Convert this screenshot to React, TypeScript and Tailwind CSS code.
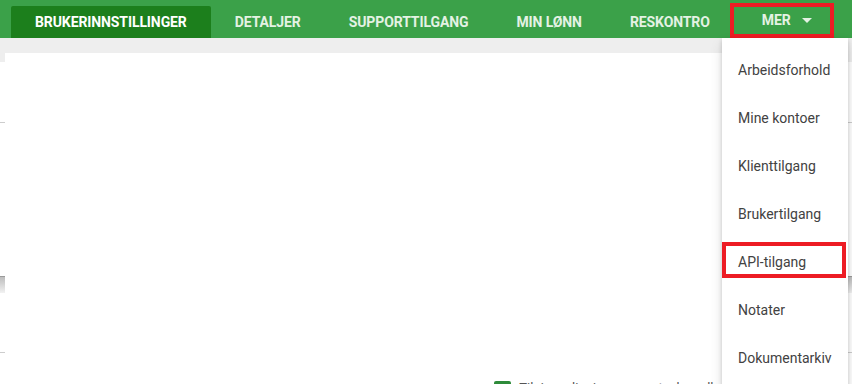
const tabs = ["DETALJER", "SUPPORTTILGANG", "MIN LØNN", "RESKONTRO"];

const menuItems = [
  "Arbeidsforhold",
  "Mine kontoer",
  "Klienttilgang",
  "Brukertilgang",
  "API-tilgang",
  "Notater",
  "Dokumentarkiv",
];

// bits of the page behind the white panel, seen at the edges
function SideStrip({ className }: { className: string }) {
  return (
    <div className={`flex flex-col ${className}`}>
      <div className="h-[9px] bg-[#eeeeee]" />
      <div className="h-[61px] border-b border-[#cdcdcd]" />
      <div className="h-[153px]" />
      <div className="h-[17px] border-t border-[#9a9a9a] bg-gradient-to-b from-[#bdbdbd] to-[#f2f2f2]" />
      <div className="h-[60px] border-b border-[#cdcdcd]" />
    </div>
  );
}

export default function App() {
  return (
    <div className="relative h-[384px] w-[852px] overflow-hidden bg-white font-['Roboto',sans-serif]">
      {/* Toppmeny */}
      <nav className="flex h-[38px] items-end bg-[#3ba149] pl-[11px] text-[14px] font-bold tracking-[-0.1px]">
        <div className="flex h-[32px] items-center rounded-t-[2px] bg-[#1c7f1c] px-6 text-white">
          BRUKERINNSTILLINGER
        </div>
        {tabs.map((tab) => (
          <div key={tab} className="flex h-[32px] items-center px-6 text-[#e4f2e4]">
            {tab}
          </div>
        ))}
        <div className="ml-[-4px] flex h-[35px] w-[104px] items-center gap-[11px] border-4 border-[#ed1c24] pl-[28px] text-[#e4f2e4]">
          <span>MER</span>
          <span className="h-0 w-0 border-x-[5px] border-t-[5px] border-x-transparent border-t-[#e4f2e4]" />
        </div>
      </nav>

      <div className="h-[15px] bg-[#eeeeee]" />

      <div className="flex">
        <SideStrip className="w-[6px]" />
        {/* Hvitt panel */}
        <div className="flex h-[331px] flex-1 flex-col bg-white pt-[327px] text-[13px] leading-4">
          <div className="flex items-start">
            <span className="ml-[14px] mt-[3px] text-[#333]">I</span>
            <div className="ml-[472px] mt-[1px] h-[12px] w-[17px] rounded-[2px] bg-[#2e8b3a]" />
            <span className="ml-[8px] whitespace-nowrap text-[#555]">Tilgjengeliggjøre supportsaksvedlegg l</span>
          </div>
        </div>
        <SideStrip className="w-[140px]" />
      </div>

      {/* Nedtrekksmeny for MER */}
      <div className="absolute left-[722px] top-[38px] h-[360px] w-[126px] bg-white py-2 shadow-[0_2px_4px_rgba(0,0,0,0.18),0_6px_12px_rgba(0,0,0,0.12)]">
        {menuItems.map((item) => (
          <div key={item} className="flex h-12 items-center px-4 text-[14px] text-[#424242]">
            {item}
          </div>
        ))}
        <div className="absolute left-0 top-[204px] h-[36px] w-[124px] border-4 border-[#ed1c24]" />
      </div>
    </div>
  );
}
